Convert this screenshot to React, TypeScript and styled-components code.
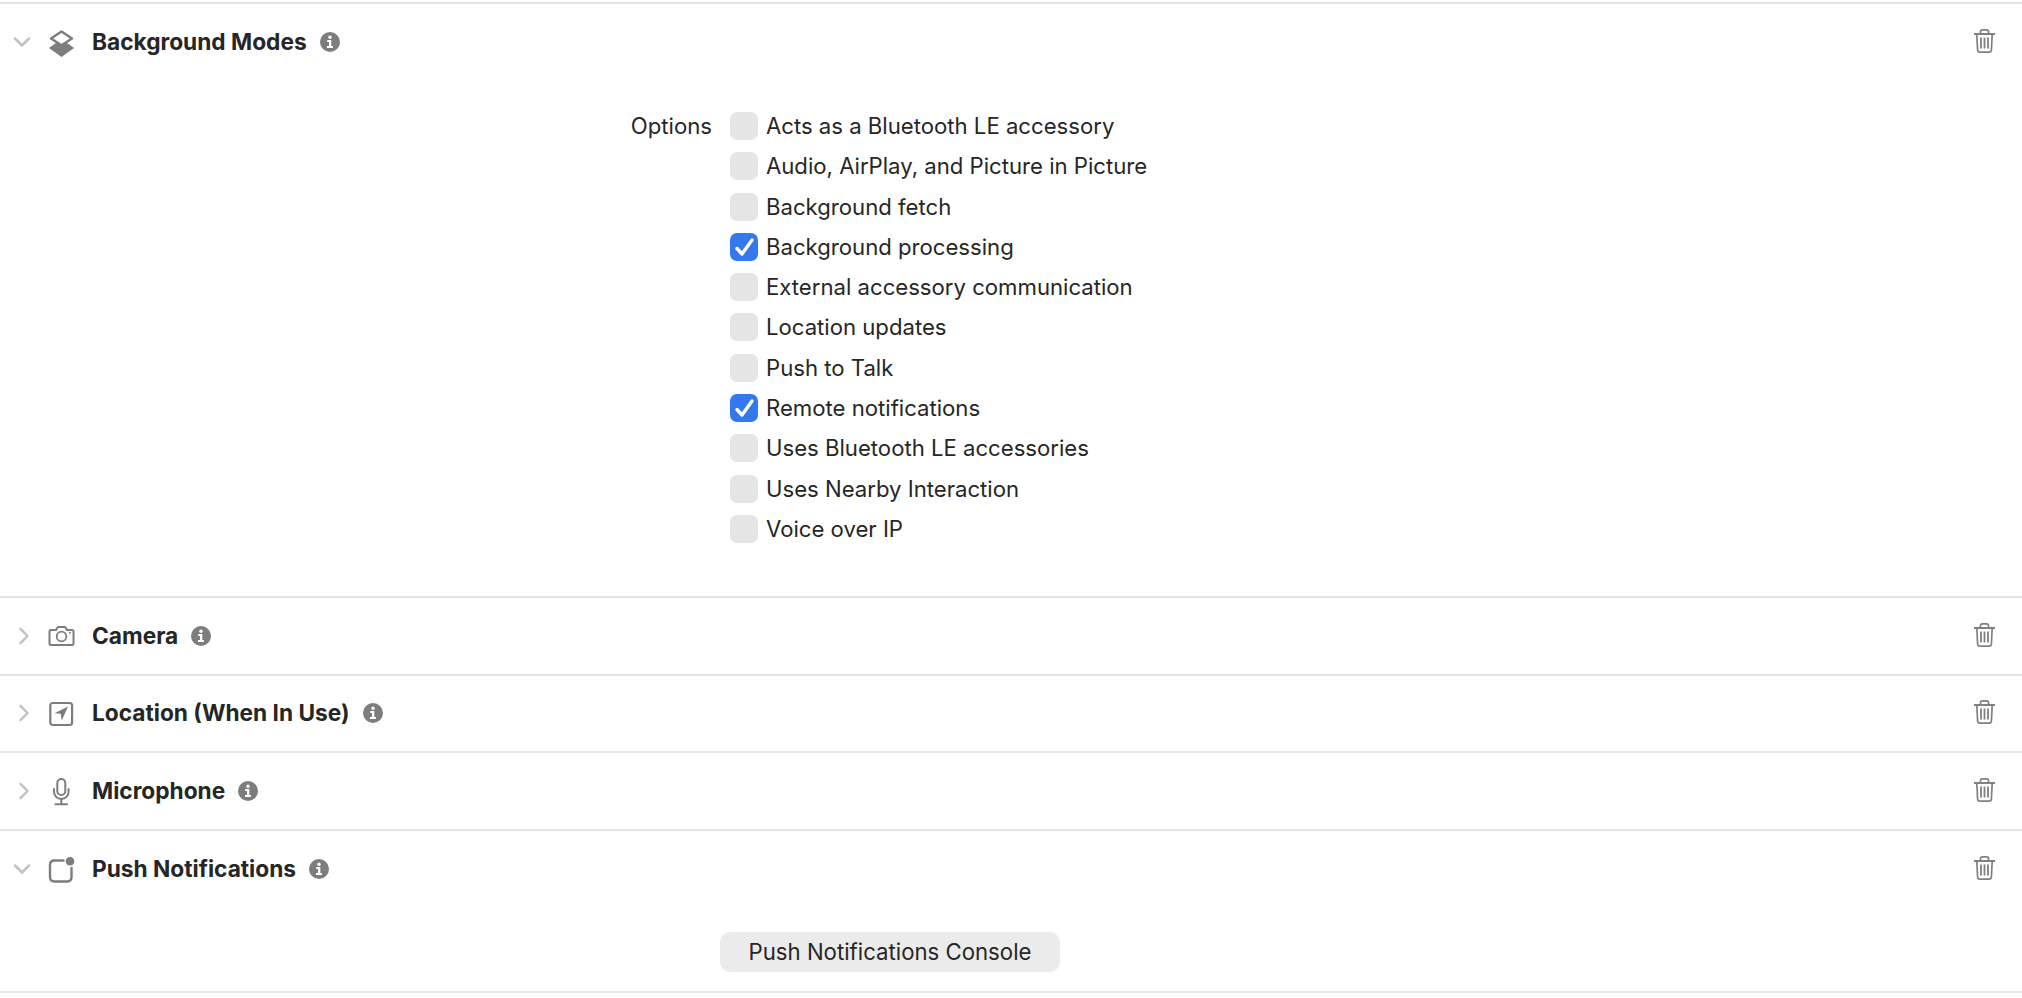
import React from "react";
import styled, { createGlobalStyle } from "styled-components";

const Global = createGlobalStyle`
  html, body { margin: 0; padding: 0; background: #fff; }
  body { font-family: Inter, "Liberation Sans", sans-serif; color: #262626; -webkit-font-smoothing: antialiased; }
`;

const Page = styled.main`
  width: 2022px;
  height: 998px;
  overflow: hidden;
  padding-top: 2px;
  box-sizing: border-box;
  background: #fff;
`;

const Section = styled.section`
  border-top: 2px solid #e5e5e5;
  &:last-child { border-bottom: 2px solid #e5e5e5; }
`;

const Header = styled.header`
  height: 75.6px;
  display: flex;
  align-items: center;
`;

const ChevronSlot = styled.span<{ $open?: boolean }>`
  width: 42px;
  height: 30px;
  box-sizing: border-box;
  padding-left: ${(p) => (p.$open ? "1px" : "6px")};
  display: flex;
  align-items: center;
  justify-content: center;
  color: #c2c2c2;
`;

const IconSlot = styled.span`
  width: 38px;
  height: 30px;
  display: flex;
  align-items: center;
  justify-content: center;
  color: #7d7d7d;
`;

const Title = styled.h2`
  margin: 0 0 0 12px;
  font-size: 22.7px;
  font-weight: 700;
  line-height: 28px;
  color: #262626;
`;

const InfoButton = styled.span`
  width: 20px;
  height: 20px;
  margin-left: 13px;
  color: #7d7d7d;
  display: flex;
`;

const Trash = styled.span`
  margin-left: auto;
  margin-right: 27px;
  padding-bottom: 2px;
  color: #808080;
  display: flex;
`;

const Options = styled.div`
  display: grid;
  grid-template-columns: 712px 1fr;
  column-gap: 18px;
  padding: 26.25px 0 46.85px;
`;

const OptionsLabel = styled.div`
  font-size: 22.15px;
  line-height: 40.3px;
  text-align: right;
`;

const OptionList = styled.ul`
  list-style: none;
  margin: 0;
  padding: 0;
`;

const OptionRow = styled.li`
  height: 40.3px;
  display: flex;
  align-items: center;
  gap: 8px;
  font-size: 22.15px;
`;

const Check = styled.span<{ $on?: boolean }>`
  width: 28px;
  height: 28px;
  flex: none;
  border-radius: 7px;
  background: ${(p) => (p.$on ? "#3478f0" : "#e5e5e5")};
  display: flex;
  color: #fff;
`;

const ButtonRow = styled.div`
  display: flex;
  padding: 25.4px 0 19px 720px;
`;

const ConsoleButton = styled.button`
  width: 340px;
  height: 40px;
  padding: 0;
  border: 0;
  border-radius: 10px;
  background: #ebebeb;
  color: #262626;
  font: 400 22.2px Inter, "Liberation Sans", sans-serif;
`;

const ChevronDown = () => (
  <svg width="18" height="12" viewBox="0 0 18 12" fill="none" stroke="currentColor" strokeWidth="2.5" strokeLinecap="round" strokeLinejoin="round">
    <path d="M2 2.500 9 9.500 16 2.500" />
  </svg>
);
const ChevronRight = () => (
  <svg width="12" height="18" viewBox="0 0 12 18" fill="none" stroke="currentColor" strokeWidth="2.500" strokeLinecap="round" strokeLinejoin="round">
    <path d="M2.500 1.800 9.500 9 2.500 16.200" />
  </svg>
);
const Info = () => (
  <svg width="20" height="20" viewBox="0 0 20 20">
    <circle cx="10" cy="10" r="10" fill="currentColor" />
    <circle cx="10" cy="5.300" r="1.700" fill="#fff" />
    <path d="M7.200 8.100h4.100v6h1.600v1.800H7v-1.800h2v-4.200H7.200z" fill="#fff" />
  </svg>
);
const TrashIcon = () => (
  <svg width="21" height="24" viewBox="0 0 21 24" fill="none" stroke="currentColor" strokeWidth="1.700">
    <path d="M0 5h21" strokeWidth="2" />
    <path d="M6.500 5V2.600C6.500 1.500 7.200.9 8.200.9h4.600c1 0 1.700.6 1.700 1.700V5" />
    <path d="M2.800 5l.8 16c.1 1.300 1 2.100 2.200 2.100h9.400c1.200 0 2.100-.8 2.200-2.100l.8-16" />
    <path d="M7 8.500v11M10.500 8.500v11M14 8.500v11" strokeWidth="1.800" />
  </svg>
);
const LayersIcon = () => (
  <svg width="30" height="30" viewBox="0 0 30 30">
    <path d="M15.500 12 28 21 15.500 30 3 21z" fill="currentColor" />
    <path d="M15.500 4.500 26 11.500 15.500 18.200 5 11.500z" fill="#fff" stroke="currentColor" strokeWidth="2.400" strokeLinejoin="round" />
  </svg>
);
const CameraIcon = () => (
  <svg width="30" height="30" viewBox="0 0 30 30" fill="none" stroke="currentColor" strokeWidth="2">
    <path d="M5 9h5l1.600-2.700c.2-.3.4-.4.800-.4h6.200c.4 0 .6.1.8.4L21 9h5c1 0 1.500.6 1.500 1.500v12c0 .9-.5 1.500-1.500 1.500H5c-1 0-1.500-.6-1.500-1.500v-12C3.500 9.600 4 9 5 9z" />
    <circle cx="15.500" cy="15.500" r="4.800" strokeWidth="1.800" />
    <circle cx="24" cy="11.800" r="1" fill="currentColor" stroke="none" />
  </svg>
);
const LocationIcon = () => (
  <svg width="30" height="30" viewBox="0 0 30 30" fill="none">
    <rect x="4.300" y="5" width="21.800" height="22" rx="2.500" stroke="currentColor" strokeWidth="2.200" />
    <path d="M22 8.500 8.500 15.200l6.200.6 1 7z" fill="currentColor" />
  </svg>
);
const MicIcon = () => (
  <svg width="30" height="30" viewBox="0 0 30 30" fill="none" stroke="currentColor" strokeWidth="2" strokeLinecap="round">
    <rect x="11.300" y="3" width="8" height="16" rx="4" />
    <path d="M8 13v2.500c0 4.400 3.200 7.500 7.300 7.500s7.300-3.100 7.300-7.500V13" />
    <path d="M15.300 23v5M9.500 28.300h11.600" />
  </svg>
);
const PushIcon = () => (
  <svg width="30" height="30" viewBox="0 0 30 30" fill="none">
    <path d="M17.500 6.500H8.500C5.500 6.500 4 8 4 11v12c0 3 1.500 4.500 4.500 4.500H21c3 0 4.500-1.500 4.500-4.500v-9" stroke="currentColor" strokeWidth="2.400" strokeLinecap="round" />
    <circle cx="24" cy="7.200" r="4.300" fill="currentColor" />
  </svg>
);

const RowHead = ({ title, icon, open }: { title: string; icon: React.ReactNode; open?: boolean }) => (
  <Header>
    <ChevronSlot $open={open}>{open ? <ChevronDown /> : <ChevronRight />}</ChevronSlot>
    <IconSlot>{icon}</IconSlot>
    <Title>{title}</Title>
    <InfoButton><Info /></InfoButton>
    <Trash><TrashIcon /></Trash>
  </Header>
);

const options: [string, boolean][] = [
  ["Acts as a Bluetooth LE accessory", false],
  ["Audio, AirPlay, and Picture in Picture", false],
  ["Background fetch", false],
  ["Background processing", true],
  ["External accessory communication", false],
  ["Location updates", false],
  ["Push to Talk", false],
  ["Remote notifications", true],
  ["Uses Bluetooth LE accessories", false],
  ["Uses Nearby Interaction", false],
  ["Voice over IP", false],
];

export default function App() {
  return (
    <Page>
      <Global />
      <Section>
        <RowHead open title="Background Modes" icon={<LayersIcon />} />
        <Options>
          <OptionsLabel>Options</OptionsLabel>
          <OptionList>
            {options.map(([label, on]) => (
              <OptionRow key={label}>
                <Check $on={on}>
                  {on && (
                    <svg width="28" height="28" viewBox="0 0 28 28" fill="none" stroke="currentColor" strokeWidth="3.400" strokeLinecap="round" strokeLinejoin="round">
                      <path d="M7 15.500 12 21 22 7" />
                    </svg>
                  )}
                </Check>
                <span>{label}</span>
              </OptionRow>
            ))}
          </OptionList>
        </Options>
      </Section>
      <Section><RowHead title="Camera" icon={<CameraIcon />} /></Section>
      <Section><RowHead title="Location (When In Use)" icon={<LocationIcon />} /></Section>
      <Section><RowHead title="Microphone" icon={<MicIcon />} /></Section>
      <Section>
        <RowHead open title="Push Notifications" icon={<PushIcon />} />
        <ButtonRow><ConsoleButton>Push Notifications Console</ConsoleButton></ButtonRow>
      </Section>
    </Page>
  );
}
